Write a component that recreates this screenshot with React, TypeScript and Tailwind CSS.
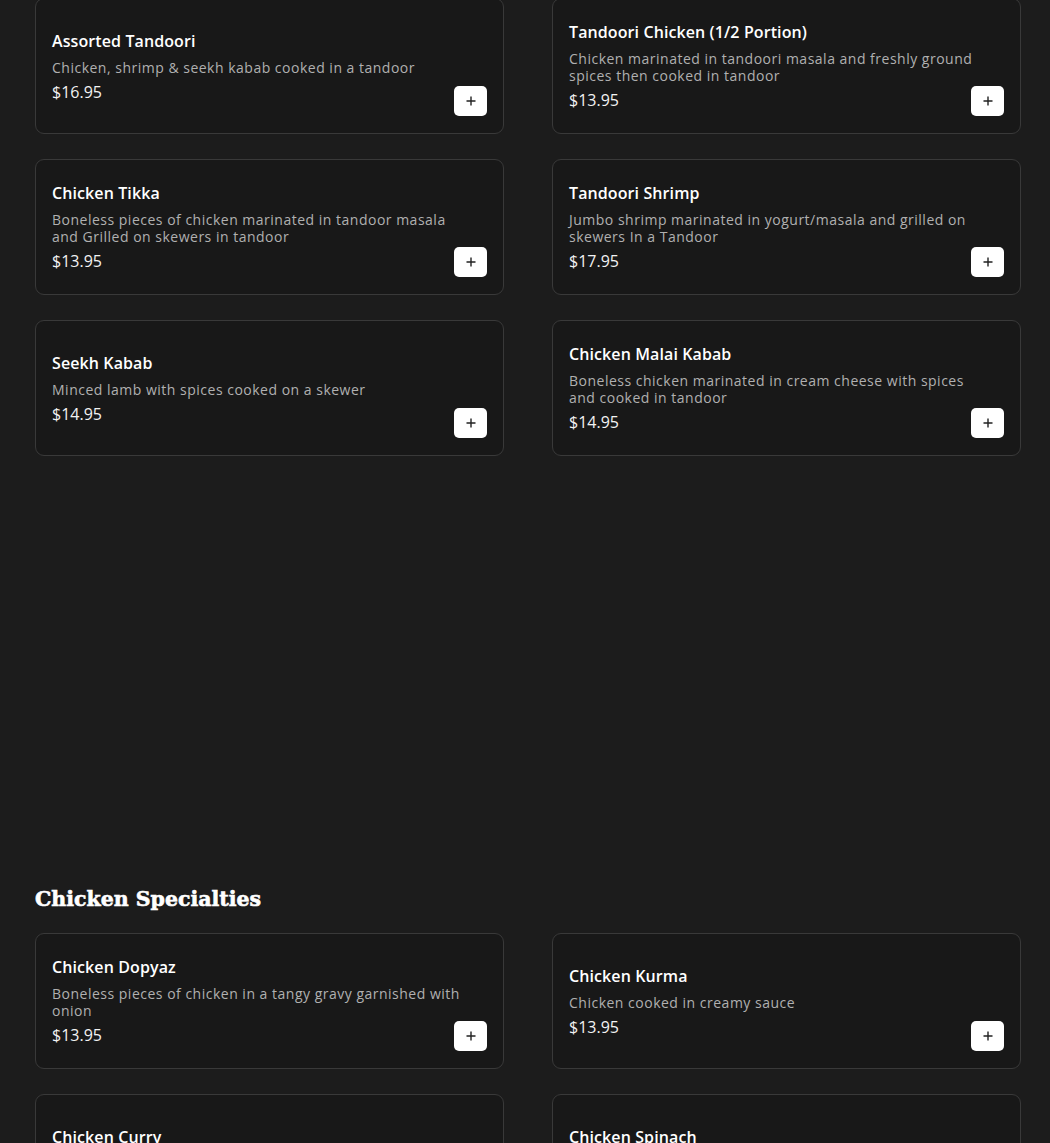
import React from "react";

type Item = { name: string; desc: string; price: string };

const tandoori: Item[] = [
  { name: "Assorted Tandoori", desc: "Chicken, shrimp & seekh kabab cooked in a tandoor", price: "$16.95" },
  { name: "Tandoori Chicken (1/2 Portion)", desc: "Chicken marinated in tandoori masala and freshly ground spices then cooked in tandoor", price: "$13.95" },
  { name: "Chicken Tikka", desc: "Boneless pieces of chicken marinated in tandoor masala and Grilled on skewers in tandoor", price: "$13.95" },
  { name: "Tandoori Shrimp", desc: "Jumbo shrimp marinated in yogurt/masala and grilled on skewers In a Tandoor", price: "$17.95" },
  { name: "Seekh Kabab", desc: "Minced lamb with spices cooked on a skewer", price: "$14.95" },
  { name: "Chicken Malai Kabab", desc: "Boneless chicken marinated in cream cheese with spices and cooked in tandoor", price: "$14.95" },
];

const chicken: Item[] = [
  { name: "Chicken Dopyaz", desc: "Boneless pieces of chicken in a tangy gravy garnished with onion", price: "$13.95" },
  { name: "Chicken Kurma", desc: "Chicken cooked in creamy sauce", price: "$13.95" },
  { name: "Chicken Curry", desc: "Chicken cooked in a traditional curry sauce", price: "$13.95" },
  { name: "Chicken Spinach", desc: "Chicken cooked with spinach and spices", price: "$13.95" },
];

function Card({ item }: { item: Item }) {
  return (
    <div className="relative h-[136px] rounded-[9px] border border-[#393939] bg-[#181818] pl-[16px] pr-[30px] flex items-center">
      <div className="flex-1">
        <div className="text-[16px] leading-[20px] font-semibold text-white mb-[8px] tracking-[0.1px]">{item.name}</div>
        <div className="text-[14px] leading-[17px] text-[#b0b0b0] mb-[6px] tracking-[0.5px]">{item.desc}</div>
        <div className="text-[16px] leading-[20px] text-[#f2f2f2]">{item.price}</div>
      </div>
      <button className="absolute right-[16px] bottom-[17px] w-[33px] h-[30px] rounded-[5px] bg-white flex items-center justify-center">
        <svg width="10" height="10" viewBox="0 0 10 10">
          <path d="M5 0.5V9.5M0.5 5H9.5" stroke="#222" strokeWidth="1.4" />
        </svg>
      </button>
    </div>
  );
}

export default function App() {
  return (
    <div
      className="h-[1143px] bg-[#1c1c1c] pl-[35px] overflow-hidden"
      style={{ fontFamily: '"Open Sans", sans-serif' }}
    >
      <div className="grid grid-cols-[469px_469px] gap-x-[48px] gap-y-[25px] -mt-[2px]">
        {tandoori.map((it) => (
          <Card key={it.name} item={it} />
        ))}
      </div>
      <h2
        className="mt-[427px] mb-[18px] text-[20.5px] leading-[32px] font-bold text-white [-webkit-text-stroke:0.6px_white]"
        style={{ fontFamily: '"DejaVu Serif", serif' }}
      >
        Chicken Specialties
      </h2>
      <div className="grid grid-cols-[469px_469px] gap-x-[48px] gap-y-[25px]">
        {chicken.map((it) => (
          <Card key={it.name} item={it} />
        ))}
      </div>
    </div>
  );
}
